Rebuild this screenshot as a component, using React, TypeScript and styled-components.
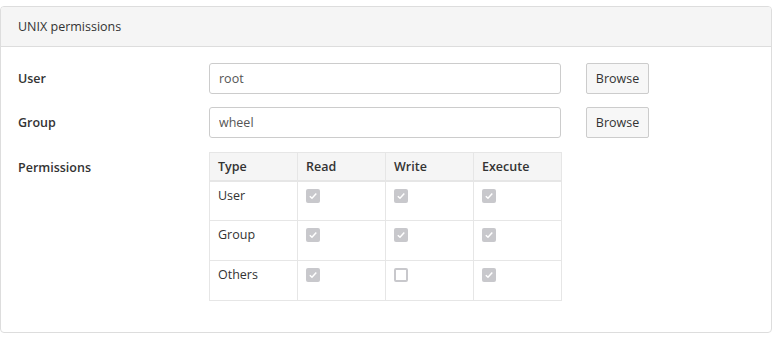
import styled, { createGlobalStyle } from "styled-components";

const GlobalStyle = createGlobalStyle`
  body {
    margin: 0;
    background: #fff;
    font-family: "Open Sans", "Noto Sans", sans-serif;
    font-size: 12.5px;
    color: #333;
  }
`;

type Perm = { type: string; read: boolean; write: boolean; execute: boolean };

const perms: Array<Perm> = [
  { type: "User", read: true, write: true, execute: true },
  { type: "Group", read: true, write: true, execute: true },
  { type: "Others", read: true, write: false, execute: true },
];

const Check = ({ checked }: { checked: boolean }) => (
  <CheckBox $checked={checked}>
    {checked && (
      <svg width="10" height="10" viewBox="0 0 10 10">
        <path d="M1.8 5.2 L4 7.3 L8.3 2.6" fill="none" stroke="#fff" strokeWidth="1.5" />
      </svg>
    )}
  </CheckBox>
);

const App = () => {
  return (
    <Page>
      <GlobalStyle />
      <Card>
        <CardHeader>UNIX permissions</CardHeader>
        <CardBody>
          <FormRow>
            <Label>User</Label>
            <Input defaultValue="root" />
            <Button>Browse</Button>
          </FormRow>
          <FormRow>
            <Label>Group</Label>
            <Input defaultValue="wheel" />
            <Button>Browse</Button>
          </FormRow>
          <FormRow $top>
            <Label $top>Permissions</Label>
            <Table>
              <thead>
                <tr>
                  <Th>Type</Th>
                  <Th>Read</Th>
                  <Th>Write</Th>
                  <Th>Execute</Th>
                </tr>
              </thead>
              <tbody>
                {perms.map((p) => (
                  <tr key={p.type}>
                    <Td>{p.type}</Td>
                    <Td>
                      <Check checked={p.read} />
                    </Td>
                    <Td>
                      <Check checked={p.write} />
                    </Td>
                    <Td>
                      <Check checked={p.execute} />
                    </Td>
                  </tr>
                ))}
              </tbody>
            </Table>
          </FormRow>
        </CardBody>
      </Card>
    </Page>
  );
};

const Page = styled.div`
  padding: 6px 6px 0 0;
`;

const Card = styled.div`
  width: 772px;
  box-sizing: border-box;
  border: 1px solid #ddd;
  border-radius: 4px;
  overflow: hidden;
`;

const CardHeader = styled.div`
  height: 40px;
  box-sizing: border-box;
  padding: 0 17px;
  display: flex;
  align-items: center;
  background: #f5f5f5;
  border-bottom: 1px solid #ddd;
`;

const CardBody = styled.div`
  padding: 16px 16px 31px 17px;
  display: flex;
  flex-direction: column;
  gap: 13px;
`;

const FormRow = styled.div<{ $top?: boolean }>`
  display: flex;
  align-items: ${(p) => (p.$top ? "flex-start" : "center")};
  margin-top: ${(p) => (p.$top ? "1px" : "0")};
`;

const Label = styled.div<{ $top?: boolean }>`
  width: 191px;
  font-weight: 600;
  padding-top: ${(p) => (p.$top ? "7px" : "0")};
`;

const Input = styled.input`
  width: 352px;
  height: 31px;
  box-sizing: border-box;
  border: 1px solid #ccc;
  border-radius: 3px;
  padding: 0 9px;
  font: inherit;
  color: #555;
  outline: none;
`;

const Button = styled.button`
  margin-left: 25px;
  width: 63px;
  height: 31px;
  box-sizing: border-box;
  border: 1px solid #ccc;
  border-radius: 2px;
  background: #f7f7f7;
  font: inherit;
  color: #333;
  padding: 0;
`;

const Table = styled.table`
  width: 353px;
  border-collapse: collapse;
  table-layout: fixed;
`;

const Th = styled.th`
  height: 28px;
  box-sizing: border-box;
  background: #f5f5f5;
  border: 1px solid #e6e6e6;
  border-bottom: 2px solid #e6e6e6;
  text-align: left;
  font-weight: 600;
  padding: 0 8px;
`;

const Td = styled.td`
  height: 40px;
  box-sizing: border-box;
  border: 1px solid #e6e6e6;
  vertical-align: top;
  padding: 5px 8px 0 8px;
`;

const CheckBox = styled.span<{ $checked: boolean }>`
  display: inline-flex;
  align-items: center;
  justify-content: center;
  width: 14px;
  height: 14px;
  box-sizing: border-box;
  margin-top: 2px;
  border-radius: 2px;
  background: ${(p) => (p.$checked ? "#c8c8cc" : "#fff")};
  border: ${(p) => (p.$checked ? "none" : "2px solid #c8c8cc")};
`;

export default App;
